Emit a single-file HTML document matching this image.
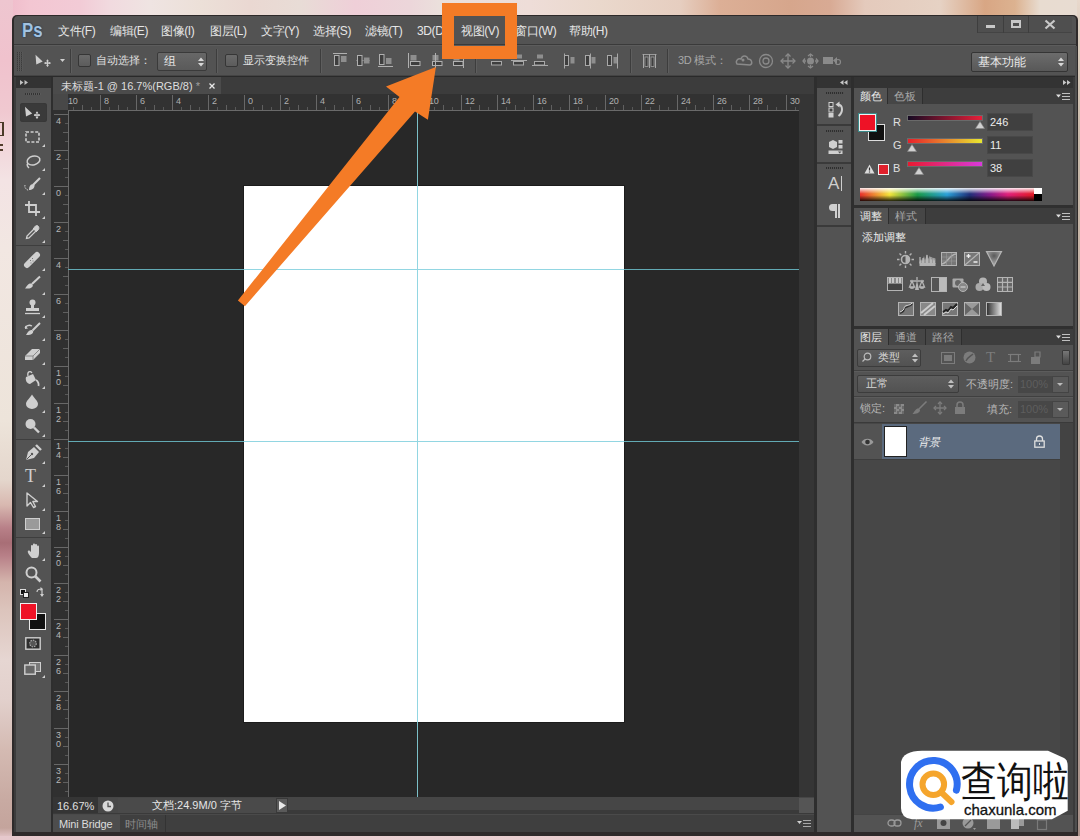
<!DOCTYPE html>
<html><head><meta charset="utf-8"><style>*{margin:0;padding:0;box-sizing:border-box}
html,body{width:1080px;height:840px;overflow:hidden}
body{position:relative;font-family:"Liberation Sans",sans-serif;font-size:12px;color:#e0e0e0;background:#efd6d8}
.a{position:absolute}
.t{position:absolute;white-space:nowrap;line-height:1}
svg{position:absolute;overflow:visible}
</style></head><body>
<div class="a" style="left:0;top:0;width:1080px;height:840px;background:#e9d6d4"></div>
<div class="a" style="left:0;top:0;width:1080px;height:16px;background:linear-gradient(90deg,#eeb8c8 0px,#f3c6d2 30px,#f2cbd6 80px,#f1dadf 110px,#efe4e2 150px,#ece0d8 200px,#ead8d2 250px,#e8dcd6 300px,#efcfd8 355px,#ecd6da 410px,#ebe0dc 440px,#eeddd8 530px,#ead8cc 600px,#e6cec0 680px,#dcaf96 720px,#d6a68c 790px,#d8aa94 830px,#e4cabc 865px,#e6d2c4 940px,#d8a684 985px,#dcb290 1015px,#e8dcd0 1040px,#e8dcd2 1080px)"></div>
<div class="a" style="left:0;top:0;width:13px;height:840px;background:linear-gradient(180deg,#eec6d0 0px,#f0c2cd 60px,#f0c8d0 110px,#f3e3e4 180px,#f2e7e2 250px,#ede4da 420px,#e4d6cc 480px,#d8b8b0 505px,#b88088 528px,#a86e76 543px,#b88088 556px,#d4b4ac 582px,#dcc4bc 610px,#e6d6d2 660px,#e2d0cc 700px,#d4bab2 750px,#c8aaa2 800px,#c4a49c 828px,#e6c8cc 838px)"></div>
<div class="a" style="left:1077px;top:0;width:3px;height:840px;background:linear-gradient(180deg,#e8d8cc 0px,#d8c8b8 60px,#c8b8a8 140px,#c0aca0 420px,#a89088 840px)"></div>
<div class="a" style="left:0;top:836px;width:1080px;height:4px;background:linear-gradient(90deg,#e6c8cc,#ead0d2 40%,#e6c8ca 70%,#e4c6c4)"></div>
<div class="a" style="left:0;top:122px;width:4px;height:14px;border:1.5px solid #4a3a28;border-left:none;border-right-width:2px"></div><div class="a" style="left:0;top:144px;width:3px;height:2px;background:#503c2c"></div><div class="a" style="left:0;top:149px;width:3px;height:2px;background:#503c2c"></div>
<div class="a" style="left:12px;top:15px;width:1066px;height:821px;background:#2e2a2a;border-radius:5px 5px 0 0"></div>
<div class="a" style="left:14px;top:16px;width:1062px;height:816px;background:#535353;border-radius:4px 4px 0 0"></div>
<div class="a" style="left:14px;top:44px;width:1062px;height:1px;background:#3a3a3a"></div>
<div class="a" style="left:14px;top:45px;width:1062px;height:1px;background:#5c5c5c"></div>
<div class="a" style="left:14px;top:75px;width:1062px;height:1px;background:#444"></div><div class="a" style="left:14px;top:76px;width:1062px;height:1px;background:#2a2a2a"></div>
<div class="a" style="left:14px;top:77px;width:1062px;height:755px;background:#3c3c3c"></div>
<div class="t" style="left:58px;top:24px;line-height:14px;font-size:12px;letter-spacing:-0.4px;color:#e6e6e6">文件(F)</div>
<div class="t" style="left:110px;top:24px;line-height:14px;font-size:12px;letter-spacing:-0.4px;color:#e6e6e6">编辑(E)</div>
<div class="t" style="left:161px;top:24px;line-height:14px;font-size:12px;letter-spacing:-0.4px;color:#e6e6e6">图像(I)</div>
<div class="t" style="left:210px;top:24px;line-height:14px;font-size:12px;letter-spacing:-0.4px;color:#e6e6e6">图层(L)</div>
<div class="t" style="left:261px;top:24px;line-height:14px;font-size:12px;letter-spacing:-0.4px;color:#e6e6e6">文字(Y)</div>
<div class="t" style="left:313px;top:24px;line-height:14px;font-size:12px;letter-spacing:-0.4px;color:#e6e6e6">选择(S)</div>
<div class="t" style="left:365px;top:24px;line-height:14px;font-size:12px;letter-spacing:-0.4px;color:#e6e6e6">滤镜(T)</div>
<div class="t" style="left:417px;top:24px;line-height:14px;font-size:12px;letter-spacing:-0.4px;color:#e6e6e6">3D(D)</div>
<div class="t" style="left:461px;top:24px;line-height:14px;font-size:12px;letter-spacing:-0.4px;color:#e6e6e6">视图(V)</div>
<div class="t" style="left:515px;top:24px;line-height:14px;font-size:12px;letter-spacing:-0.4px;color:#e6e6e6">窗口(W)</div>
<div class="t" style="left:569px;top:24px;line-height:14px;font-size:12px;letter-spacing:-0.4px;color:#e6e6e6">帮助(H)</div>
<div class="t" style="left:22px;top:20px;font-size:19.5px;font-weight:bold;color:#a2c2e0;line-height:20px;transform:scaleX(0.86);transform-origin:0 0;text-shadow:0 0 1px #1e3a5a,0 0 2px #1e3a5a">Ps</div>
<div class="a" style="left:977px;top:16px;width:95px;height:17px;background:#4f4f4f;border-bottom:1px solid #444"></div>
<div class="a" style="left:977px;top:16px;width:1px;height:17px;background:#3e3e3e"></div>
<div class="a" style="left:1003px;top:16px;width:1px;height:17px;background:#3e3e3e"></div>
<div class="a" style="left:1028px;top:16px;width:1px;height:17px;background:#3e3e3e"></div>
<div class="a" style="left:986px;top:25px;width:9px;height:3px;background:#c8c8c8"></div>
<div class="a" style="left:1011px;top:20px;width:10px;height:8px;border:2px solid #c8c8c8;border-top-width:3px"></div>
<svg style="left:1044px;top:19px" width="12" height="11"><path d="M1.5 1.5 L10.5 9.5 M10.5 1.5 L1.5 9.5" stroke="#c8c8c8" stroke-width="2.2"/></svg>
<div class="a" style="left:17px;top:52px;width:6px;height:19px;background:repeating-linear-gradient(90deg,#3c3c3c 0 1px,#5a5a5a 1px 2px)"></div><div class="a" style="left:17px;top:52px;width:6px;height:19px;background:repeating-linear-gradient(180deg,rgba(83,83,83,0) 0 1px,rgba(83,83,83,.6) 1px 2px)"></div>
<svg style="left:34px;top:54px" width="20" height="14"><path d="M1.5 0.8 L2.3 10.5 L8.7 7.6 Z" fill="#cfcfcf"/><path d="M13.5 6.2v6 M10.5 9.1h6" stroke="#cfcfcf" stroke-width="1.1"/><path d="M12.1 7.3L13.5 5.3L14.9 7.3Z M12.1 10.9L13.5 12.9L14.9 10.9Z M12.3 7.7L10.3 9.1L12.3 10.5Z M14.7 7.7L16.7 9.1L14.7 10.5Z" fill="#cfcfcf"/></svg>
<svg style="left:60px;top:59px" width="6" height="4"><path d="M0 0 H5 L2.5 3 Z" fill="#d0d0d0"/></svg>
<div class="a" style="left:70px;top:49px;width:1px;height:24px;background:#3d3d3d"></div><div class="a" style="left:71px;top:49px;width:1px;height:24px;background:#5e5e5e"></div>
<div class="a" style="left:78px;top:54px;width:13px;height:13px;border:1px solid #363636;border-radius:2px;background:linear-gradient(#6a6a6a,#5c5c5c)"></div>
<div class="t" style="left:96px;top:54px;line-height:13px;font-size:11px;color:#e0e0e0">自动选择：</div>
<div class="a" style="left:157px;top:52px;width:50px;height:19px;border:1px solid #3a3a3a;border-radius:2px;background:linear-gradient(#676767,#5a5a5a)"></div>
<div class="t" style="left:164px;top:55px;line-height:13px;font-size:12px;color:#e6e6e6">组</div>
<svg style="left:198px;top:57px" width="6" height="10"><path d="M0 4 L3 0.5 L6 4 Z M0 6 L3 9.5 L6 6 Z" fill="#d8d8d8"/></svg>
<div class="a" style="left:216px;top:49px;width:1px;height:24px;background:#3d3d3d"></div><div class="a" style="left:217px;top:49px;width:1px;height:24px;background:#5e5e5e"></div>
<div class="a" style="left:225px;top:54px;width:13px;height:13px;border:1px solid #363636;border-radius:2px;background:linear-gradient(#6a6a6a,#5c5c5c)"></div>
<div class="t" style="left:243px;top:54px;line-height:13px;font-size:11px;color:#e0e0e0">显示变换控件</div>
<div class="a" style="left:320px;top:49px;width:1px;height:24px;background:#3d3d3d"></div><div class="a" style="left:321px;top:49px;width:1px;height:24px;background:#5e5e5e"></div>
<svg style="left:333px;top:53px" width="15" height="15"><path d="M0 0.5h14" stroke="#b0b0b0"/><rect x="1.5" y="2.5" width="4.5" height="10" fill="#3e3e3e" stroke="#b0b0b0"/><rect x="8" y="3" width="5.5" height="6" fill="#8e8e8e"/></svg>
<svg style="left:356px;top:53px" width="15" height="15"><path d="M0 7.5h14" stroke="#7a7a7a"/><rect x="1.5" y="2.5" width="4.5" height="10" fill="#3e3e3e" stroke="#b0b0b0"/><rect x="8" y="4.5" width="5.5" height="6" fill="#8e8e8e"/></svg>
<svg style="left:378px;top:53px" width="15" height="15"><path d="M0 13.5h15" stroke="#b0b0b0"/><rect x="1.5" y="1.5" width="4.5" height="10" fill="#3e3e3e" stroke="#b0b0b0"/><rect x="8" y="5" width="5.5" height="6" fill="#8e8e8e"/></svg>
<svg style="left:408px;top:53px" width="14" height="15"><rect x="2.5" y="2" width="6" height="5.5" fill="#8e8e8e"/><rect x="2.5" y="8.5" width="9.5" height="4" fill="#3e3e3e" stroke="#b0b0b0"/><path d="M0.5 0v15" stroke="#b0b0b0"/></svg>
<svg style="left:430px;top:53px" width="14" height="15"><rect x="2.5" y="2" width="6" height="5.5" fill="#8e8e8e"/><rect x="2.5" y="8.5" width="9.5" height="4" fill="#3e3e3e" stroke="#b0b0b0"/><path d="M5.5 0v15" stroke="#b0b0b0"/></svg>
<svg style="left:451px;top:53px" width="14" height="15"><rect x="2.5" y="2" width="6" height="5.5" fill="#8e8e8e"/><rect x="2.5" y="8.5" width="9.5" height="4" fill="#3e3e3e" stroke="#b0b0b0"/><path d="M12.5 0v15" stroke="#b0b0b0"/></svg>
<div class="a" style="left:475px;top:49px;width:1px;height:24px;background:#3d3d3d"></div><div class="a" style="left:476px;top:49px;width:1px;height:24px;background:#5e5e5e"></div>
<svg style="left:489px;top:53px" width="16" height="15"><rect x="5" y="1.5" width="6" height="4" fill="#8e8e8e"/><rect x="2.5" y="8.5" width="10" height="3.5" fill="#3e3e3e" stroke="#a8a8a8"/><path d="M0 3.5h16" stroke="#a8a8a8"/></svg>
<svg style="left:511px;top:53px" width="16" height="15"><rect x="5" y="1.5" width="6" height="4" fill="#8e8e8e"/><rect x="2.5" y="8.5" width="10" height="3.5" fill="#3e3e3e" stroke="#a8a8a8"/><path d="M0 7.5h16" stroke="#a8a8a8"/></svg>
<svg style="left:532px;top:53px" width="16" height="15"><rect x="5" y="1.5" width="6" height="4" fill="#8e8e8e"/><rect x="2.5" y="8.5" width="10" height="3.5" fill="#3e3e3e" stroke="#a8a8a8"/><path d="M0 12.5h16" stroke="#a8a8a8"/></svg>
<svg style="left:563px;top:53px" width="13" height="16"><rect x="1.5" y="2.5" width="4" height="10" fill="#3e3e3e" stroke="#a8a8a8"/><rect x="7.5" y="4" width="4" height="6.5" fill="#8e8e8e"/><path d="M1.5 0.5v15" stroke="#a8a8a8"/></svg>
<svg style="left:584px;top:53px" width="13" height="16"><rect x="1.5" y="2.5" width="4" height="10" fill="#3e3e3e" stroke="#a8a8a8"/><rect x="7.5" y="4" width="4" height="6.5" fill="#8e8e8e"/><path d="M6.5 0.5v15" stroke="#a8a8a8"/></svg>
<svg style="left:606px;top:53px" width="13" height="16"><rect x="1.5" y="2.5" width="4" height="10" fill="#3e3e3e" stroke="#a8a8a8"/><rect x="7.5" y="4" width="4" height="6.5" fill="#8e8e8e"/><path d="M11.5 0.5v15" stroke="#a8a8a8"/></svg>
<div class="a" style="left:630px;top:49px;width:1px;height:24px;background:#3d3d3d"></div><div class="a" style="left:631px;top:49px;width:1px;height:24px;background:#5e5e5e"></div>
<svg style="left:642px;top:53px" width="15" height="16"><path d="M0.5 1.5h14" stroke="#9a9a9a"/><path d="M1.5 1v14 M7.5 1v14 M13.5 1v14" stroke="#a8a8a8" stroke-width="1"/><rect x="3" y="4" width="3" height="9.5" fill="#3e3e3e" stroke="#a0a0a0" stroke-width="0.8"/><rect x="9" y="4" width="3" height="9.5" fill="#3e3e3e" stroke="#a0a0a0" stroke-width="0.8"/></svg>
<div class="a" style="left:667px;top:49px;width:1px;height:24px;background:#3d3d3d"></div><div class="a" style="left:668px;top:49px;width:1px;height:24px;background:#5e5e5e"></div>
<div class="t" style="left:678px;top:54px;line-height:13px;font-size:11px;letter-spacing:-0.3px;color:#a8a8a8">3D 模式：</div>
<svg style="left:735px;top:53px" width="18" height="15"><path d="M2 11 C0 8 3 5 6 6 C7 2 12 2 13 6 C17 6 18 11 15 12 Z" fill="none" stroke="#8a8a8a" stroke-width="1.4"/><circle cx="8" cy="7" r="1.5" fill="#8a8a8a"/></svg>
<svg style="left:758px;top:53px" width="16" height="16"><circle cx="8" cy="8" r="6.5" fill="none" stroke="#8a8a8a" stroke-width="1.3"/><circle cx="8" cy="8" r="3" fill="none" stroke="#8a8a8a" stroke-width="1.3"/></svg>
<svg style="left:780px;top:53px" width="16" height="16"><path d="M8 1v14 M1 8h14" stroke="#8a8a8a" stroke-width="1.3"/><path d="M5.5 3.5L8 1L10.5 3.5 M5.5 12.5L8 15L10.5 12.5 M3.5 5.5L1 8L3.5 10.5 M12.5 5.5L15 8L12.5 10.5" fill="none" stroke="#8a8a8a" stroke-width="1.3"/></svg>
<svg style="left:802px;top:53px" width="17" height="16"><circle cx="8.5" cy="8" r="3.5" fill="#8a8a8a"/><path d="M8.5 1v3 M8.5 12v3 M1 8h3 M13 8h3" stroke="#8a8a8a" stroke-width="1.3"/><path d="M6 3L8.5 1L11 3 M6 13L8.5 15L11 13 M3 5.5L1 8L3 10.5 M14 5.5L16 8L14 10.5" fill="none" stroke="#8a8a8a" stroke-width="1.3"/></svg>
<svg style="left:823px;top:54px" width="18" height="14"><rect x="0" y="3" width="10" height="7" fill="#8a8a8a"/><path d="M10 6.5 L14 3 V10 Z" fill="#8a8a8a"/><circle cx="15" cy="8" r="2.5" fill="none" stroke="#8a8a8a" stroke-width="1.2"/></svg>
<div class="a" style="left:971px;top:52px;width:97px;height:20px;border:1px solid #353535;border-radius:2px;background:linear-gradient(#6c6c6c,#585858)"></div>
<div class="t" style="left:978px;top:55px;line-height:14px;font-size:11.5px;color:#ececec">基本功能</div>
<svg style="left:1058px;top:57px" width="6" height="10"><path d="M0 4 L3 0.5 L6 4 Z M0 6 L3 9.5 L6 6 Z" fill="#d8d8d8"/></svg>
<div class="a" style="left:16px;top:77px;width:36px;height:11px;background:#333"></div>
<svg style="left:20px;top:80px" width="10" height="5"><path d="M0 0L3.5 2.5L0 5Z M4.5 0L8 2.5L4.5 5Z" fill="#c0c0c0"/></svg>
<div class="a" style="left:53px;top:77px;width:761px;height:17px;background:#3c3c3c"></div>
<div class="a" style="left:53px;top:77px;width:168px;height:17px;background:#4b4b4b"></div>
<div class="t" style="left:61px;top:79px;line-height:14px;font-size:11px;color:#dedede">未标题-1 @ 16.7%(RGB/8) <span style="color:#a0a0a0">*</span></div>
<svg style="left:209px;top:83px" width="6" height="6"><path d="M0.5 0.5L5.5 5.5M5.5 0.5L0.5 5.5" stroke="#e8e8e8" stroke-width="1.3"/></svg>
<div class="a" style="left:53px;top:94px;width:747px;height:17px;background:#323232"></div>
<div class="a" style="left:53px;top:110px;width:15px;height:689px;background:#303030"></div>
<div class="a" style="left:53px;top:94px;width:15px;height:16px;background:#484848"></div>
<div class="a" style="left:68px;top:110px;width:732px;height:1px;background:#6a6a6a"></div>
<div class="a" style="left:68px;top:110px;width:1px;height:688px;background:#6a6a6a"></div>
<div class="a" style="left:69px;top:111px;width:730px;height:686px;background:#282828"></div>
<div class="a" style="left:799px;top:94px;width:15px;height:704px;background:#353535"></div>
<div class="t" style="left:68px;top:97px;line-height:9px;font-size:9px;color:#b0b0b0;letter-spacing:-0.3px">10</div>
<div class="a" style="left:73px;top:107px;width:1px;height:3px;background:#585858"></div>
<div class="a" style="left:82px;top:105px;width:1px;height:5px;background:#606060"></div>
<div class="a" style="left:91px;top:107px;width:1px;height:3px;background:#585858"></div>
<div class="a" style="left:100px;top:95px;width:1px;height:15px;background:#686868"></div>
<div class="t" style="left:104px;top:97px;line-height:9px;font-size:9px;color:#b0b0b0;letter-spacing:-0.3px">8</div>
<div class="a" style="left:109px;top:107px;width:1px;height:3px;background:#585858"></div>
<div class="a" style="left:118px;top:105px;width:1px;height:5px;background:#606060"></div>
<div class="a" style="left:127px;top:107px;width:1px;height:3px;background:#585858"></div>
<div class="a" style="left:136px;top:95px;width:1px;height:15px;background:#686868"></div>
<div class="t" style="left:140px;top:97px;line-height:9px;font-size:9px;color:#b0b0b0;letter-spacing:-0.3px">6</div>
<div class="a" style="left:145px;top:107px;width:1px;height:3px;background:#585858"></div>
<div class="a" style="left:154px;top:105px;width:1px;height:5px;background:#606060"></div>
<div class="a" style="left:163px;top:107px;width:1px;height:3px;background:#585858"></div>
<div class="a" style="left:172px;top:95px;width:1px;height:15px;background:#686868"></div>
<div class="t" style="left:176px;top:97px;line-height:9px;font-size:9px;color:#b0b0b0;letter-spacing:-0.3px">4</div>
<div class="a" style="left:181px;top:107px;width:1px;height:3px;background:#585858"></div>
<div class="a" style="left:190px;top:105px;width:1px;height:5px;background:#606060"></div>
<div class="a" style="left:199px;top:107px;width:1px;height:3px;background:#585858"></div>
<div class="a" style="left:208px;top:95px;width:1px;height:15px;background:#686868"></div>
<div class="t" style="left:212px;top:97px;line-height:9px;font-size:9px;color:#b0b0b0;letter-spacing:-0.3px">2</div>
<div class="a" style="left:217px;top:107px;width:1px;height:3px;background:#585858"></div>
<div class="a" style="left:226px;top:105px;width:1px;height:5px;background:#606060"></div>
<div class="a" style="left:235px;top:107px;width:1px;height:3px;background:#585858"></div>
<div class="a" style="left:244px;top:95px;width:1px;height:15px;background:#686868"></div>
<div class="t" style="left:248px;top:97px;line-height:9px;font-size:9px;color:#b0b0b0;letter-spacing:-0.3px">0</div>
<div class="a" style="left:253px;top:107px;width:1px;height:3px;background:#585858"></div>
<div class="a" style="left:262px;top:105px;width:1px;height:5px;background:#606060"></div>
<div class="a" style="left:271px;top:107px;width:1px;height:3px;background:#585858"></div>
<div class="a" style="left:280px;top:95px;width:1px;height:15px;background:#686868"></div>
<div class="t" style="left:284px;top:97px;line-height:9px;font-size:9px;color:#b0b0b0;letter-spacing:-0.3px">2</div>
<div class="a" style="left:289px;top:107px;width:1px;height:3px;background:#585858"></div>
<div class="a" style="left:298px;top:105px;width:1px;height:5px;background:#606060"></div>
<div class="a" style="left:307px;top:107px;width:1px;height:3px;background:#585858"></div>
<div class="a" style="left:316px;top:95px;width:1px;height:15px;background:#686868"></div>
<div class="t" style="left:320px;top:97px;line-height:9px;font-size:9px;color:#b0b0b0;letter-spacing:-0.3px">4</div>
<div class="a" style="left:325px;top:107px;width:1px;height:3px;background:#585858"></div>
<div class="a" style="left:334px;top:105px;width:1px;height:5px;background:#606060"></div>
<div class="a" style="left:343px;top:107px;width:1px;height:3px;background:#585858"></div>
<div class="a" style="left:352px;top:95px;width:1px;height:15px;background:#686868"></div>
<div class="t" style="left:356px;top:97px;line-height:9px;font-size:9px;color:#b0b0b0;letter-spacing:-0.3px">6</div>
<div class="a" style="left:361px;top:107px;width:1px;height:3px;background:#585858"></div>
<div class="a" style="left:370px;top:105px;width:1px;height:5px;background:#606060"></div>
<div class="a" style="left:379px;top:107px;width:1px;height:3px;background:#585858"></div>
<div class="a" style="left:388px;top:95px;width:1px;height:15px;background:#686868"></div>
<div class="t" style="left:392px;top:97px;line-height:9px;font-size:9px;color:#b0b0b0;letter-spacing:-0.3px">8</div>
<div class="a" style="left:397px;top:107px;width:1px;height:3px;background:#585858"></div>
<div class="a" style="left:406px;top:105px;width:1px;height:5px;background:#606060"></div>
<div class="a" style="left:415px;top:107px;width:1px;height:3px;background:#585858"></div>
<div class="a" style="left:425px;top:95px;width:1px;height:15px;background:#686868"></div>
<div class="t" style="left:429px;top:97px;line-height:9px;font-size:9px;color:#b0b0b0;letter-spacing:-0.3px">10</div>
<div class="a" style="left:434px;top:107px;width:1px;height:3px;background:#585858"></div>
<div class="a" style="left:443px;top:105px;width:1px;height:5px;background:#606060"></div>
<div class="a" style="left:452px;top:107px;width:1px;height:3px;background:#585858"></div>
<div class="a" style="left:461px;top:95px;width:1px;height:15px;background:#686868"></div>
<div class="t" style="left:465px;top:97px;line-height:9px;font-size:9px;color:#b0b0b0;letter-spacing:-0.3px">12</div>
<div class="a" style="left:470px;top:107px;width:1px;height:3px;background:#585858"></div>
<div class="a" style="left:479px;top:105px;width:1px;height:5px;background:#606060"></div>
<div class="a" style="left:488px;top:107px;width:1px;height:3px;background:#585858"></div>
<div class="a" style="left:497px;top:95px;width:1px;height:15px;background:#686868"></div>
<div class="t" style="left:501px;top:97px;line-height:9px;font-size:9px;color:#b0b0b0;letter-spacing:-0.3px">14</div>
<div class="a" style="left:506px;top:107px;width:1px;height:3px;background:#585858"></div>
<div class="a" style="left:515px;top:105px;width:1px;height:5px;background:#606060"></div>
<div class="a" style="left:524px;top:107px;width:1px;height:3px;background:#585858"></div>
<div class="a" style="left:533px;top:95px;width:1px;height:15px;background:#686868"></div>
<div class="t" style="left:537px;top:97px;line-height:9px;font-size:9px;color:#b0b0b0;letter-spacing:-0.3px">16</div>
<div class="a" style="left:542px;top:107px;width:1px;height:3px;background:#585858"></div>
<div class="a" style="left:551px;top:105px;width:1px;height:5px;background:#606060"></div>
<div class="a" style="left:560px;top:107px;width:1px;height:3px;background:#585858"></div>
<div class="a" style="left:569px;top:95px;width:1px;height:15px;background:#686868"></div>
<div class="t" style="left:573px;top:97px;line-height:9px;font-size:9px;color:#b0b0b0;letter-spacing:-0.3px">18</div>
<div class="a" style="left:578px;top:107px;width:1px;height:3px;background:#585858"></div>
<div class="a" style="left:587px;top:105px;width:1px;height:5px;background:#606060"></div>
<div class="a" style="left:596px;top:107px;width:1px;height:3px;background:#585858"></div>
<div class="a" style="left:605px;top:95px;width:1px;height:15px;background:#686868"></div>
<div class="t" style="left:609px;top:97px;line-height:9px;font-size:9px;color:#b0b0b0;letter-spacing:-0.3px">20</div>
<div class="a" style="left:614px;top:107px;width:1px;height:3px;background:#585858"></div>
<div class="a" style="left:623px;top:105px;width:1px;height:5px;background:#606060"></div>
<div class="a" style="left:632px;top:107px;width:1px;height:3px;background:#585858"></div>
<div class="a" style="left:641px;top:95px;width:1px;height:15px;background:#686868"></div>
<div class="t" style="left:645px;top:97px;line-height:9px;font-size:9px;color:#b0b0b0;letter-spacing:-0.3px">22</div>
<div class="a" style="left:650px;top:107px;width:1px;height:3px;background:#585858"></div>
<div class="a" style="left:659px;top:105px;width:1px;height:5px;background:#606060"></div>
<div class="a" style="left:668px;top:107px;width:1px;height:3px;background:#585858"></div>
<div class="a" style="left:677px;top:95px;width:1px;height:15px;background:#686868"></div>
<div class="t" style="left:681px;top:97px;line-height:9px;font-size:9px;color:#b0b0b0;letter-spacing:-0.3px">24</div>
<div class="a" style="left:686px;top:107px;width:1px;height:3px;background:#585858"></div>
<div class="a" style="left:695px;top:105px;width:1px;height:5px;background:#606060"></div>
<div class="a" style="left:704px;top:107px;width:1px;height:3px;background:#585858"></div>
<div class="a" style="left:713px;top:95px;width:1px;height:15px;background:#686868"></div>
<div class="t" style="left:717px;top:97px;line-height:9px;font-size:9px;color:#b0b0b0;letter-spacing:-0.3px">26</div>
<div class="a" style="left:722px;top:107px;width:1px;height:3px;background:#585858"></div>
<div class="a" style="left:731px;top:105px;width:1px;height:5px;background:#606060"></div>
<div class="a" style="left:740px;top:107px;width:1px;height:3px;background:#585858"></div>
<div class="a" style="left:749px;top:95px;width:1px;height:15px;background:#686868"></div>
<div class="t" style="left:753px;top:97px;line-height:9px;font-size:9px;color:#b0b0b0;letter-spacing:-0.3px">28</div>
<div class="a" style="left:758px;top:107px;width:1px;height:3px;background:#585858"></div>
<div class="a" style="left:767px;top:105px;width:1px;height:5px;background:#606060"></div>
<div class="a" style="left:776px;top:107px;width:1px;height:3px;background:#585858"></div>
<div class="a" style="left:786px;top:95px;width:1px;height:15px;background:#686868"></div>
<div class="t" style="left:790px;top:97px;line-height:9px;font-size:9px;color:#b0b0b0;letter-spacing:-0.3px">30</div>
<div class="a" style="left:795px;top:107px;width:1px;height:3px;background:#585858"></div>
<div class="a" style="left:54px;top:114px;width:14px;height:1px;background:#686868"></div>
<div class="t" style="left:56px;top:117px;line-height:9px;font-size:9px;color:#b8b8b8"><div>4</div></div>
<div class="a" style="left:65px;top:123px;width:3px;height:1px;background:#585858"></div>
<div class="a" style="left:63px;top:132px;width:5px;height:1px;background:#606060"></div>
<div class="a" style="left:65px;top:141px;width:3px;height:1px;background:#585858"></div>
<div class="a" style="left:54px;top:150px;width:14px;height:1px;background:#686868"></div>
<div class="t" style="left:56px;top:153px;line-height:9px;font-size:9px;color:#b8b8b8"><div>2</div></div>
<div class="a" style="left:65px;top:159px;width:3px;height:1px;background:#585858"></div>
<div class="a" style="left:63px;top:168px;width:5px;height:1px;background:#606060"></div>
<div class="a" style="left:65px;top:177px;width:3px;height:1px;background:#585858"></div>
<div class="a" style="left:54px;top:186px;width:14px;height:1px;background:#686868"></div>
<div class="t" style="left:56px;top:189px;line-height:9px;font-size:9px;color:#b8b8b8"><div>0</div></div>
<div class="a" style="left:65px;top:195px;width:3px;height:1px;background:#585858"></div>
<div class="a" style="left:63px;top:204px;width:5px;height:1px;background:#606060"></div>
<div class="a" style="left:65px;top:213px;width:3px;height:1px;background:#585858"></div>
<div class="a" style="left:54px;top:222px;width:14px;height:1px;background:#686868"></div>
<div class="t" style="left:56px;top:225px;line-height:9px;font-size:9px;color:#b8b8b8"><div>2</div></div>
<div class="a" style="left:65px;top:231px;width:3px;height:1px;background:#585858"></div>
<div class="a" style="left:63px;top:240px;width:5px;height:1px;background:#606060"></div>
<div class="a" style="left:65px;top:249px;width:3px;height:1px;background:#585858"></div>
<div class="a" style="left:54px;top:258px;width:14px;height:1px;background:#686868"></div>
<div class="t" style="left:56px;top:261px;line-height:9px;font-size:9px;color:#b8b8b8"><div>4</div></div>
<div class="a" style="left:65px;top:267px;width:3px;height:1px;background:#585858"></div>
<div class="a" style="left:63px;top:276px;width:5px;height:1px;background:#606060"></div>
<div class="a" style="left:65px;top:285px;width:3px;height:1px;background:#585858"></div>
<div class="a" style="left:54px;top:294px;width:14px;height:1px;background:#686868"></div>
<div class="t" style="left:56px;top:297px;line-height:9px;font-size:9px;color:#b8b8b8"><div>6</div></div>
<div class="a" style="left:65px;top:303px;width:3px;height:1px;background:#585858"></div>
<div class="a" style="left:63px;top:312px;width:5px;height:1px;background:#606060"></div>
<div class="a" style="left:65px;top:321px;width:3px;height:1px;background:#585858"></div>
<div class="a" style="left:54px;top:330px;width:14px;height:1px;background:#686868"></div>
<div class="t" style="left:56px;top:333px;line-height:9px;font-size:9px;color:#b8b8b8"><div>8</div></div>
<div class="a" style="left:65px;top:339px;width:3px;height:1px;background:#585858"></div>
<div class="a" style="left:63px;top:348px;width:5px;height:1px;background:#606060"></div>
<div class="a" style="left:65px;top:357px;width:3px;height:1px;background:#585858"></div>
<div class="a" style="left:54px;top:366px;width:14px;height:1px;background:#686868"></div>
<div class="t" style="left:56px;top:369px;line-height:9px;font-size:9px;color:#b8b8b8"><div>1</div><div>0</div></div>
<div class="a" style="left:65px;top:376px;width:3px;height:1px;background:#585858"></div>
<div class="a" style="left:63px;top:385px;width:5px;height:1px;background:#606060"></div>
<div class="a" style="left:65px;top:394px;width:3px;height:1px;background:#585858"></div>
<div class="a" style="left:54px;top:403px;width:14px;height:1px;background:#686868"></div>
<div class="t" style="left:56px;top:406px;line-height:9px;font-size:9px;color:#b8b8b8"><div>1</div><div>2</div></div>
<div class="a" style="left:65px;top:412px;width:3px;height:1px;background:#585858"></div>
<div class="a" style="left:63px;top:421px;width:5px;height:1px;background:#606060"></div>
<div class="a" style="left:65px;top:430px;width:3px;height:1px;background:#585858"></div>
<div class="a" style="left:54px;top:439px;width:14px;height:1px;background:#686868"></div>
<div class="t" style="left:56px;top:442px;line-height:9px;font-size:9px;color:#b8b8b8"><div>1</div><div>4</div></div>
<div class="a" style="left:65px;top:448px;width:3px;height:1px;background:#585858"></div>
<div class="a" style="left:63px;top:457px;width:5px;height:1px;background:#606060"></div>
<div class="a" style="left:65px;top:466px;width:3px;height:1px;background:#585858"></div>
<div class="a" style="left:54px;top:475px;width:14px;height:1px;background:#686868"></div>
<div class="t" style="left:56px;top:478px;line-height:9px;font-size:9px;color:#b8b8b8"><div>1</div><div>6</div></div>
<div class="a" style="left:65px;top:484px;width:3px;height:1px;background:#585858"></div>
<div class="a" style="left:63px;top:493px;width:5px;height:1px;background:#606060"></div>
<div class="a" style="left:65px;top:502px;width:3px;height:1px;background:#585858"></div>
<div class="a" style="left:54px;top:511px;width:14px;height:1px;background:#686868"></div>
<div class="t" style="left:56px;top:514px;line-height:9px;font-size:9px;color:#b8b8b8"><div>1</div><div>8</div></div>
<div class="a" style="left:65px;top:520px;width:3px;height:1px;background:#585858"></div>
<div class="a" style="left:63px;top:529px;width:5px;height:1px;background:#606060"></div>
<div class="a" style="left:65px;top:538px;width:3px;height:1px;background:#585858"></div>
<div class="a" style="left:54px;top:547px;width:14px;height:1px;background:#686868"></div>
<div class="t" style="left:56px;top:550px;line-height:9px;font-size:9px;color:#b8b8b8"><div>2</div><div>0</div></div>
<div class="a" style="left:65px;top:556px;width:3px;height:1px;background:#585858"></div>
<div class="a" style="left:63px;top:565px;width:5px;height:1px;background:#606060"></div>
<div class="a" style="left:65px;top:574px;width:3px;height:1px;background:#585858"></div>
<div class="a" style="left:54px;top:583px;width:14px;height:1px;background:#686868"></div>
<div class="t" style="left:56px;top:586px;line-height:9px;font-size:9px;color:#b8b8b8"><div>2</div><div>2</div></div>
<div class="a" style="left:65px;top:592px;width:3px;height:1px;background:#585858"></div>
<div class="a" style="left:63px;top:601px;width:5px;height:1px;background:#606060"></div>
<div class="a" style="left:65px;top:610px;width:3px;height:1px;background:#585858"></div>
<div class="a" style="left:54px;top:619px;width:14px;height:1px;background:#686868"></div>
<div class="t" style="left:56px;top:622px;line-height:9px;font-size:9px;color:#b8b8b8"><div>2</div><div>4</div></div>
<div class="a" style="left:65px;top:628px;width:3px;height:1px;background:#585858"></div>
<div class="a" style="left:63px;top:637px;width:5px;height:1px;background:#606060"></div>
<div class="a" style="left:65px;top:646px;width:3px;height:1px;background:#585858"></div>
<div class="a" style="left:54px;top:655px;width:14px;height:1px;background:#686868"></div>
<div class="t" style="left:56px;top:658px;line-height:9px;font-size:9px;color:#b8b8b8"><div>2</div><div>6</div></div>
<div class="a" style="left:65px;top:664px;width:3px;height:1px;background:#585858"></div>
<div class="a" style="left:63px;top:673px;width:5px;height:1px;background:#606060"></div>
<div class="a" style="left:65px;top:682px;width:3px;height:1px;background:#585858"></div>
<div class="a" style="left:54px;top:691px;width:14px;height:1px;background:#686868"></div>
<div class="t" style="left:56px;top:694px;line-height:9px;font-size:9px;color:#b8b8b8"><div>2</div><div>8</div></div>
<div class="a" style="left:65px;top:700px;width:3px;height:1px;background:#585858"></div>
<div class="a" style="left:63px;top:709px;width:5px;height:1px;background:#606060"></div>
<div class="a" style="left:65px;top:718px;width:3px;height:1px;background:#585858"></div>
<div class="a" style="left:54px;top:728px;width:14px;height:1px;background:#686868"></div>
<div class="t" style="left:56px;top:731px;line-height:9px;font-size:9px;color:#b8b8b8"><div>3</div><div>0</div></div>
<div class="a" style="left:65px;top:737px;width:3px;height:1px;background:#585858"></div>
<div class="a" style="left:63px;top:746px;width:5px;height:1px;background:#606060"></div>
<div class="a" style="left:65px;top:755px;width:3px;height:1px;background:#585858"></div>
<div class="a" style="left:54px;top:764px;width:14px;height:1px;background:#686868"></div>
<div class="t" style="left:56px;top:767px;line-height:9px;font-size:9px;color:#b8b8b8"><div>3</div><div>2</div></div>
<div class="a" style="left:65px;top:773px;width:3px;height:1px;background:#585858"></div>
<div class="a" style="left:63px;top:782px;width:5px;height:1px;background:#606060"></div>
<div class="a" style="left:65px;top:791px;width:3px;height:1px;background:#585858"></div>
<div class="a" style="left:243px;top:185px;width:382px;height:538px;background:#fff;border:1px solid #1c1c1c"></div>
<div class="a" style="left:68px;top:269px;width:176px;height:1px;background:#62aab4"></div>
<div class="a" style="left:244px;top:269px;width:380px;height:1px;background:#92d6e2"></div>
<div class="a" style="left:624px;top:269px;width:175px;height:1px;background:#62aab4"></div>
<div class="a" style="left:68px;top:441px;width:176px;height:1px;background:#62aab4"></div>
<div class="a" style="left:244px;top:441px;width:380px;height:1px;background:#92d6e2"></div>
<div class="a" style="left:624px;top:441px;width:175px;height:1px;background:#62aab4"></div>
<div class="a" style="left:417px;top:111px;width:1px;height:75px;background:#7cc0c8"></div>
<div class="a" style="left:417px;top:186px;width:1px;height:536px;background:#92d6e2"></div>
<div class="a" style="left:417px;top:722px;width:1px;height:76px;background:#7cc0c8"></div>
<div class="a" style="left:53px;top:797px;width:761px;height:13px;background:#464646"></div>
<div class="a" style="left:53px;top:810px;width:761px;height:4px;background:#3a3a3a"></div>
<div class="a" style="left:53px;top:797px;width:45px;height:16px;background:#353535"></div>
<div class="t" style="left:57px;top:800px;line-height:12px;font-size:11px;color:#e0e0e0">16.67%</div>
<div class="a" style="left:98px;top:798px;width:20px;height:15px;background:#484848"></div>
<svg style="left:102px;top:800px" width="12" height="12"><circle cx="6" cy="6" r="5.5" fill="#d8d8d8"/><path d="M6 2.5V6.5H9" stroke="#555" stroke-width="1.3" fill="none"/></svg>
<div class="a" style="left:118px;top:798px;width:158px;height:15px;background:#4a4a4a"></div>
<div class="t" style="left:152px;top:799px;line-height:13px;font-size:11px;color:#e6e6e6">文档:24.9M/0 字节</div>
<div class="a" style="left:276px;top:798px;width:12px;height:15px;background:#5a5a5a;border:1px solid #3a3a3a"></div>
<svg style="left:279px;top:801px" width="7" height="9"><path d="M0 0L7 4.5L0 9Z" fill="#e8e8e8"/></svg>
<div class="a" style="left:799px;top:798px;width:15px;height:15px;background:#555"></div>
<div class="a" style="left:53px;top:814px;width:761px;height:18px;background:#3f3f3f;border-top:1px solid #4a4a4a"></div>
<div class="a" style="left:53px;top:815px;width:67px;height:17px;background:#4d4d4d"></div>
<div class="t" style="left:59px;top:818px;line-height:12px;font-size:11px;letter-spacing:-0.15px;color:#dcdcdc">Mini Bridge</div>
<div class="t" style="left:125px;top:818px;line-height:12px;font-size:11px;color:#8c8c8c">时间轴</div>
<div class="a" style="left:165px;top:815px;width:1px;height:17px;background:#333"></div>
<svg style="left:797px;top:819px" width="15" height="9"><path d="M0 2H5L2.5 5Z" fill="#d0d0d0"/><path d="M6 1.5H14M6 4.5H14M6 7.5H14" stroke="#a8a8a8"/></svg>
<div class="a" style="left:814px;top:77px;width:3px;height:755px;background:#2e2e2e"></div>
<div class="a" style="left:51px;top:77px;width:2px;height:755px;background:#2e2e2e"></div>
<div class="a" style="left:16px;top:88px;width:35px;height:744px;background:#535353"></div>
<div class="a" style="left:25px;top:93px;width:16px;height:2px;background:repeating-linear-gradient(90deg,#333 0 1px,#5a5a5a 1px 2px)"></div>
<div class="a" style="left:20px;top:103px;width:27px;height:19px;background:#3a3a3a;border-radius:3px;box-shadow:inset 0 0 1px #2a2a2a"></div>
<svg style="left:24px;top:106px" width="18" height="14"><path d="M1 0.8 L2 10.5 L8.2 7.6 Z" fill="#cfcfcf"/><path d="M13 6.2v6 M10 9.1h6" stroke="#cfcfcf" stroke-width="1.1"/><path d="M11.6 7.3L13 5.3L14.4 7.3Z M11.6 10.9L13 12.9L14.4 10.9Z M11.8 7.7L9.8 9.1L11.8 10.5Z M14.2 7.7L16.2 9.1L14.2 10.5Z" fill="#cfcfcf"/></svg>
<svg style="left:25px;top:131px" width="15" height="12"><rect x="1" y="1" width="13" height="10" fill="none" stroke="#cfcfcf" stroke-width="1.6" stroke-dasharray="3 1.6"/></svg><svg style="left:42px;top:144px" width="3" height="3"><path d="M3 0V3H0Z" fill="#d0d0d0"/></svg>
<svg style="left:25px;top:155px" width="16" height="14"><ellipse cx="8.5" cy="5.5" rx="6.5" ry="4.3" fill="none" stroke="#cfcfcf" stroke-width="1.5" transform="rotate(-15 8.5 5.5)"/><path d="M3 8 C1 10 3 12 4 13" fill="none" stroke="#cfcfcf" stroke-width="1.4"/></svg><svg style="left:42px;top:168px" width="3" height="3"><path d="M3 0V3H0Z" fill="#d0d0d0"/></svg>
<svg style="left:24px;top:177px" width="18" height="15"><path d="M16 1 L9 8" stroke="#cfcfcf" stroke-width="2.2"/><path d="M9.5 7 C6 7 5 10 5 13 C8 13 11 11 10.5 8 Z" fill="#cfcfcf"/><path d="M1 8 C0 11 3 13 5 13.5" fill="none" stroke="#cfcfcf" stroke-width="1" stroke-dasharray="1.5 1"/></svg><svg style="left:42px;top:192px" width="3" height="3"><path d="M3 0V3H0Z" fill="#d0d0d0"/></svg>
<svg style="left:25px;top:201px" width="16" height="15"><path d="M4 0v11h11 M0 4h11v11" fill="none" stroke="#cfcfcf" stroke-width="1.8"/></svg><svg style="left:42px;top:216px" width="3" height="3"><path d="M3 0V3H0Z" fill="#d0d0d0"/></svg>
<svg style="left:25px;top:224px" width="16" height="16"><path d="M1.5 14.5 L2 12 L9 5 L11 7 L4 14 Z" fill="none" stroke="#cfcfcf" stroke-width="1.3"/><path d="M8 4 L12 8 M10 2.5 C12 0 15 3 13.5 5.5 L11.5 7.5 L8.5 4.5 Z" fill="#cfcfcf" stroke="#cfcfcf" stroke-width="1"/></svg><svg style="left:42px;top:240px" width="3" height="3"><path d="M3 0V3H0Z" fill="#d0d0d0"/></svg>
<div class="a" style="left:16px;top:245px;width:35px;height:1px;background:#3e3e3e"></div>
<svg style="left:24px;top:252px" width="17" height="16"><path d="M3 13 L13 3" stroke="#cfcfcf" stroke-width="6" stroke-linecap="round"/><path d="M6 8.5h1M8 6.5h1M8.5 9h1M6.5 11h1" stroke="#7a7a7a" stroke-width="1.2"/></svg><svg style="left:42px;top:268px" width="3" height="3"><path d="M3 0V3H0Z" fill="#d0d0d0"/></svg>
<svg style="left:24px;top:276px" width="17" height="14"><path d="M16 0.5 L8 8" stroke="#cfcfcf" stroke-width="2"/><path d="M7.5 7.5 C4 7 3 10 1 12.5 C5 13 9 12 8.8 9 Z" fill="#cfcfcf"/></svg><svg style="left:42px;top:292px" width="3" height="3"><path d="M3 0V3H0Z" fill="#d0d0d0"/></svg>
<svg style="left:24px;top:299px" width="17" height="16"><circle cx="8.5" cy="3.5" r="3" fill="#cfcfcf"/><path d="M7 6h3v3h-3z" fill="#cfcfcf"/><rect x="2" y="9" width="13" height="3" fill="#cfcfcf"/><path d="M1 14.5h15" stroke="#cfcfcf" stroke-width="1.3"/></svg><svg style="left:42px;top:315px" width="3" height="3"><path d="M3 0V3H0Z" fill="#d0d0d0"/></svg>
<svg style="left:24px;top:322px" width="17" height="15"><path d="M16 1 L8.5 8.5" stroke="#cfcfcf" stroke-width="2"/><path d="M8 8 C5 7.5 4 10 2 13 C6 13.5 9.5 12 9.2 9.3 Z" fill="#cfcfcf"/><path d="M1 6 C3 3 6 3 8 4" fill="none" stroke="#cfcfcf" stroke-width="1.3"/><path d="M1 3.5 L1 7 L4 6.5Z" fill="#cfcfcf"/></svg><svg style="left:42px;top:338px" width="3" height="3"><path d="M3 0V3H0Z" fill="#d0d0d0"/></svg>
<svg style="left:24px;top:347px" width="17" height="14"><path d="M1 9 L8 2 L16 2 L16 6 L9 13 L1 13 Z" fill="#cfcfcf"/><path d="M1 9 L9 9 L16 2 M9 9 V13" stroke="#777" stroke-width="0.8" fill="none"/></svg><svg style="left:42px;top:362px" width="3" height="3"><path d="M3 0V3H0Z" fill="#d0d0d0"/></svg>
<svg style="left:24px;top:370px" width="17" height="17"><path d="M2 7 L9 4 L12 10 L6 14 C3 14 1 10 2 7Z" fill="#cfcfcf"/><path d="M4 6 C3 2 6 0 8 3" fill="none" stroke="#cfcfcf" stroke-width="1.3"/><path d="M12 10 C14 11 15 14 14.5 16" fill="none" stroke="#cfcfcf" stroke-width="1.8"/></svg><svg style="left:42px;top:386px" width="3" height="3"><path d="M3 0V3H0Z" fill="#d0d0d0"/></svg>
<svg style="left:25px;top:394px" width="14" height="15"><path d="M7 0.5 C9 4 13 7 13 10 A6 5 0 0 1 1 10 C1 7 5 4 7 0.5Z" fill="#cfcfcf"/></svg><svg style="left:42px;top:410px" width="3" height="3"><path d="M3 0V3H0Z" fill="#d0d0d0"/></svg>
<svg style="left:24px;top:418px" width="17" height="16"><circle cx="6.5" cy="6" r="5" fill="#cfcfcf"/><path d="M10 9.5 L15 14.5" stroke="#cfcfcf" stroke-width="2.4"/></svg><svg style="left:42px;top:434px" width="3" height="3"><path d="M3 0V3H0Z" fill="#d0d0d0"/></svg>
<div class="a" style="left:16px;top:439px;width:35px;height:1px;background:#3e3e3e"></div>
<svg style="left:25px;top:444px" width="17" height="17"><path d="M1 16 L3 8 L9 3 L14 8 L9 14 Z" fill="#cfcfcf"/><path d="M11 1 L16 6" stroke="#cfcfcf" stroke-width="2.4"/><path d="M1.5 15.5 L6.5 10.5" stroke="#555" stroke-width="1"/><circle cx="7" cy="10" r="1.2" fill="#555"/></svg><svg style="left:42px;top:461px" width="3" height="3"><path d="M3 0V3H0Z" fill="#d0d0d0"/></svg>
<div class="t" style="left:25px;top:468px;font-family:'Liberation Serif',serif;font-size:18px;line-height:16px;color:#cfcfcf">T</div><svg style="left:42px;top:484px" width="3" height="3"><path d="M3 0V3H0Z" fill="#d0d0d0"/></svg>
<svg style="left:26px;top:492px" width="13" height="16"><path d="M1 1 L1 14 L4.5 10.5 L7.5 15.5 L9.5 14.5 L6.8 9.5 L11.5 9.5 Z" fill="none" stroke="#cfcfcf" stroke-width="1.4" stroke-linejoin="round"/></svg><svg style="left:42px;top:508px" width="3" height="3"><path d="M3 0V3H0Z" fill="#d0d0d0"/></svg>
<div class="a" style="left:25px;top:518px;width:15px;height:12px;background:#9a9a9a;border:1px solid #cfcfcf"></div><svg style="left:42px;top:531px" width="3" height="3"><path d="M3 0V3H0Z" fill="#d0d0d0"/></svg>
<div class="a" style="left:16px;top:537px;width:35px;height:1px;background:#3e3e3e"></div>
<svg style="left:27px;top:543px" width="17" height="16"><path d="M5 15 C2 12 0 9 1 8 C2 7 3 8 4 9 L4 3 C4 1.5 6 1.5 6 3 L6 7 L6 1.5 C6 0 8 0 8 1.5 L8 7 L8 2 C8 0.5 10 0.5 10 2 L10 7.5 L10 3.5 C10 2 12 2 12 3.5 L12 10 C12 13 11 15 9 15 Z" fill="#cfcfcf"/></svg><svg style="left:42px;top:558px" width="3" height="3"><path d="M3 0V3H0Z" fill="#d0d0d0"/></svg>
<svg style="left:25px;top:566px" width="17" height="17"><circle cx="6.5" cy="6.5" r="5" fill="none" stroke="#cfcfcf" stroke-width="2"/><path d="M10 10 L15.5 15.5" stroke="#cfcfcf" stroke-width="2.6"/></svg>
<div class="a" style="left:20px;top:589px;width:6px;height:6px;background:#111;border:1px solid #ddd"></div><div class="a" style="left:23px;top:592px;width:6px;height:6px;background:#eee;border:1px solid #222"></div>
<svg style="left:36px;top:588px" width="10" height="10"><path d="M1 4 C1 1.5 3 1 6 1 M6 1 V8" fill="none" stroke="#cfcfcf" stroke-width="1.2"/><path d="M4.5 -1 L7 1 L4.5 3Z M4 6 L6 9 L8 6Z" fill="#cfcfcf"/></svg>
<div class="a" style="left:29px;top:613px;width:17px;height:17px;background:#111;border:1px solid #e8e8e8"></div>
<div class="a" style="left:20px;top:603px;width:17px;height:17px;background:#ee1226;border:1px solid #f0f0f0"></div>
<svg style="left:25px;top:637px" width="16" height="13"><rect x="0.8" y="0.8" width="14.4" height="11.4" fill="#2e2e2e" stroke="#cfcfcf" stroke-width="1.4"/><circle cx="8" cy="6.5" r="3.3" fill="#555" stroke="#aaa" stroke-width="1.2" stroke-dasharray="1.5 1"/></svg>
<svg style="left:24px;top:662px" width="17" height="13"><rect x="5.5" y="0.5" width="11" height="9" fill="#7a7a7a" stroke="#d0d0d0"/><rect x="0.8" y="3" width="10.5" height="9.2" fill="#666" stroke="#cfcfcf" stroke-width="1.4"/></svg><svg style="left:42px;top:675px" width="3" height="3"><path d="M3 0V3H0Z" fill="#d0d0d0"/></svg>
<div class="a" style="left:817px;top:77px;width:259px;height:11px;background:#333"></div>
<svg style="left:840px;top:80px" width="8" height="5"><path d="M3.5 0L0 2.5L3.5 5Z M7.5 0L4 2.5L7.5 5Z" fill="#c8c8c8"/></svg>
<svg style="left:1063px;top:80px" width="8" height="5"><path d="M0 0L3.5 2.5L0 5Z M4 0L7.5 2.5L4 5Z" fill="#c8c8c8"/></svg>
<div class="a" style="left:817px;top:88px;width:34px;height:744px;background:#535353"></div>
<div class="a" style="left:851px;top:77px;width:3px;height:755px;background:#2e2e2e"></div>
<div class="a" style="left:817px;top:124px;width:34px;height:2px;background:#3a3a3a"></div>
<div class="a" style="left:817px;top:162px;width:34px;height:2px;background:#3a3a3a"></div>
<div class="a" style="left:817px;top:225px;width:34px;height:2px;background:#3a3a3a"></div>
<div class="a" style="left:826px;top:92px;width:18px;height:2px;background:repeating-linear-gradient(90deg,#2e2e2e 0 1px,#505050 1px 2px)"></div>
<div class="a" style="left:826px;top:130px;width:18px;height:2px;background:repeating-linear-gradient(90deg,#2e2e2e 0 1px,#505050 1px 2px)"></div>
<div class="a" style="left:826px;top:167px;width:18px;height:2px;background:repeating-linear-gradient(90deg,#2e2e2e 0 1px,#505050 1px 2px)"></div>
<svg style="left:828px;top:101px" width="16" height="17"><rect x="1" y="1.5" width="4" height="4" fill="#444" stroke="#cfcfcf"/><rect x="1" y="7" width="4" height="4" fill="#444" stroke="#cfcfcf"/><rect x="0.5" y="12" width="5" height="4.5" fill="#cfcfcf"/><path d="M10 3.5 C15 4 15.5 11 10.5 15" fill="none" stroke="#cfcfcf" stroke-width="2"/><path d="M7.5 3.5 L11.5 0.5 L11.5 6.5Z" fill="#cfcfcf"/></svg>
<svg style="left:828px;top:139px" width="16" height="16"><path d="M1 3 L5 1 L9 3 V8 L5 10 L1 8Z" fill="#cfcfcf"/><rect x="10.5" y="1" width="4" height="3.5" fill="#cfcfcf"/><rect x="10.5" y="6" width="4" height="3.5" fill="#cfcfcf"/><rect x="0.5" y="11.5" width="14" height="3.5" fill="#cfcfcf"/><path d="M10 12.5h3.5L11.7 14.5Z" fill="#555"/></svg>
<div class="t" style="left:828px;top:176px;font-size:17px;line-height:16px;color:#cfcfcf">A</div><div class="a" style="left:841px;top:176px;width:1px;height:15px;background:#cfcfcf"></div>
<svg style="left:829px;top:203px" width="12" height="16"><path d="M7 1 H3.5 A3.5 3.5 0 0 0 3.5 8 H6 V15 H8 V1Z" fill="#cfcfcf"/><rect x="9" y="1" width="2" height="14" fill="#cfcfcf"/></svg>
<div class="a" style="left:854px;top:88px;width:222px;height:744px;background:#303030"></div>
<div class="a" style="left:854px;top:88px;width:219px;height:16px;background:#3d3d3d"></div>
<div class="a" style="left:854px;top:88px;width:34px;height:16px;background:#535353;border-right:1px solid #2e2e2e"></div>
<div class="t" style="left:860px;top:90px;line-height:13px;font-size:11px;color:#e8e8e8">颜色</div>
<div class="a" style="left:888px;top:88px;width:35px;height:16px;background:#464646;border-right:1px solid #2e2e2e"></div>
<div class="t" style="left:894px;top:90px;line-height:13px;font-size:11px;color:#a8a8a8">色板</div>
<svg style="left:1056px;top:92px" width="15" height="9"><path d="M0 2.5H5L2.5 5.5Z" fill="#e0e0e0"/><path d="M6 1.5H14M6 4.5H14M6 7.5H14" stroke="#c0c0c0" stroke-width="1"/></svg>
<div class="a" style="left:854px;top:104px;width:219px;height:101px;background:#535353"></div>
<div class="a" style="left:868px;top:124px;width:17px;height:17px;background:#111;border:1px solid #ddd"></div>
<div class="a" style="left:859px;top:114px;width:17px;height:17px;background:#ee1226;border:1px solid #f0f0f0;box-shadow:0 0 0 1px #3a8a8a"></div>
<div class="t" style="left:893px;top:117px;font-size:11px;line-height:11px;color:#e0e0e0">R</div>
<div class="a" style="left:907px;top:115px;width:76px;height:6px;background:linear-gradient(90deg,#150a22,#e8203a);border:1px solid #6a6a6a"></div>
<svg style="left:975px;top:121px" width="10" height="8"><path d="M5 0.5 L9.5 7.5 H0.5Z" fill="#d0d0d0" stroke="#888" stroke-width="0.6"/></svg>
<div class="a" style="left:987px;top:113px;width:46px;height:18px;background:#404040;border:1px solid #484848"></div>
<div class="t" style="left:990px;top:117px;font-size:11px;line-height:11px;color:#ececec">246</div>
<div class="t" style="left:893px;top:140px;font-size:11px;line-height:11px;color:#e0e0e0">G</div>
<div class="a" style="left:907px;top:138px;width:76px;height:6px;background:linear-gradient(90deg,#e8202a,#e8e830);border:1px solid #6a6a6a"></div>
<svg style="left:907px;top:144px" width="10" height="8"><path d="M5 0.5 L9.5 7.5 H0.5Z" fill="#d0d0d0" stroke="#888" stroke-width="0.6"/></svg>
<div class="a" style="left:987px;top:136px;width:46px;height:18px;background:#404040;border:1px solid #484848"></div>
<div class="t" style="left:990px;top:140px;font-size:11px;line-height:11px;color:#ececec">11</div>
<div class="t" style="left:893px;top:163px;font-size:11px;line-height:11px;color:#e0e0e0">B</div>
<div class="a" style="left:907px;top:161px;width:76px;height:6px;background:linear-gradient(90deg,#e81a30,#d83adc);border:1px solid #6a6a6a"></div>
<svg style="left:914px;top:167px" width="10" height="8"><path d="M5 0.5 L9.5 7.5 H0.5Z" fill="#d0d0d0" stroke="#888" stroke-width="0.6"/></svg>
<div class="a" style="left:987px;top:159px;width:46px;height:18px;background:#404040;border:1px solid #484848"></div>
<div class="t" style="left:990px;top:163px;font-size:11px;line-height:11px;color:#ececec">38</div>
<svg style="left:864px;top:164px" width="11" height="10"><path d="M5.5 0.5L10.5 9.5H0.5Z" fill="#dcdcdc"/><path d="M5.5 3.5V6.5M5.5 7.5V8.5" stroke="#333" stroke-width="1.2"/></svg>
<div class="a" style="left:878px;top:164px;width:11px;height:11px;background:#e0202c;border:1px solid #eee"></div>
<div class="a" style="left:860px;top:188px;width:174px;height:13px;background:linear-gradient(180deg,rgba(255,255,255,.92) 0%,rgba(255,255,255,0) 45%,rgba(0,0,0,0) 55%,rgba(0,0,0,.85) 100%),linear-gradient(90deg,#e8302a 0%,#f4e43a 17%,#1a9a48 33%,#2aa0d8 50%,#20307a 63%,#8a1a8a 75%,#e0207a 85%,#e41a24 100%)"></div>
<div class="a" style="left:1034px;top:188px;width:8px;height:6px;background:#fff"></div><div class="a" style="left:1034px;top:194px;width:8px;height:7px;background:#000"></div>
<div class="a" style="left:854px;top:208px;width:219px;height:16px;background:#3d3d3d"></div>
<div class="a" style="left:854px;top:208px;width:35px;height:16px;background:#535353;border-right:1px solid #2e2e2e"></div>
<div class="t" style="left:860px;top:210px;line-height:13px;font-size:11px;color:#e8e8e8">调整</div>
<div class="a" style="left:889px;top:208px;width:37px;height:16px;background:#464646;border-right:1px solid #2e2e2e"></div>
<div class="t" style="left:895px;top:210px;line-height:13px;font-size:11px;color:#a8a8a8">样式</div>
<svg style="left:1056px;top:212px" width="15" height="9"><path d="M0 2.5H5L2.5 5.5Z" fill="#e0e0e0"/><path d="M6 1.5H14M6 4.5H14M6 7.5H14" stroke="#c0c0c0" stroke-width="1"/></svg>
<div class="a" style="left:854px;top:224px;width:219px;height:102px;background:#535353"></div>
<div class="t" style="left:862px;top:230px;font-size:11px;line-height:14px;color:#ececec">添加调整</div>
<svg style="left:0;top:0" width="0" height="0"><defs><linearGradient id="gr1"><stop offset="0" stop-color="#333"/><stop offset="1" stop-color="#ddd"/></linearGradient><radialGradient id="gr2" cx="0.5" cy="0.3" r="0.6"><stop offset="0" stop-color="#5a5a5a"/><stop offset="1" stop-color="#a8a8a8"/></radialGradient></defs></svg>
<svg style="left:897px;top:251px" width="18" height="18"><circle cx="8.5" cy="8.5" r="4" fill="none" stroke="#b4b4b4" stroke-width="1.6"/><path d="M8.5 4.5 A4 4 0 0 1 8.5 12.5Z" fill="#b4b4b4"/><path d="M8.5 0v2.5M8.5 14.5v2.5M0 8.5h2.5M14.5 8.5h2.5M2.5 2.5l1.8 1.8M12.7 12.7l1.8 1.8M2.5 14.5l1.8-1.8M12.7 4.3l1.8-1.8" stroke="#b4b4b4" stroke-width="1.4"/></svg>
<svg style="left:919px;top:253px" width="18" height="18"><path d="M0.5 9 L2 6 L3 8 L5 3 L6 7 L8 1 L9 6 L11 2.5 L12 7 L14 4 L15 8 L16.5 5 V11 H0.5Z" fill="#9a9a9a"/><path d="M1 4v6M4 5v5M8 2v8M12 4v6M15 5v5" stroke="#d0d0d0" stroke-width="1"/><rect x="0.5" y="10" width="16" height="3" fill="#b4b4b4"/></svg>
<svg style="left:941px;top:252px" width="18" height="18"><rect x="0.5" y="0.5" width="15" height="13" fill="#777" stroke="#b4b4b4"/><path d="M1 12 C6 12 9 2 15 2" fill="none" stroke="#b4b4b4" stroke-width="1.5"/><path d="M5.5 1v12M10.5 1v12M1 5h14M1 9h14" stroke="#9a9a9a" stroke-width="0.6"/></svg>
<svg style="left:964px;top:252px" width="18" height="18"><rect x="0.5" y="0.5" width="15" height="13" fill="#777" stroke="#b4b4b4"/><path d="M1 13 L15 1" stroke="#b4b4b4" stroke-width="1.2"/><path d="M2.5 4h4M4.5 2v4M9.5 10h4" stroke="#eee" stroke-width="1.3"/></svg>
<svg style="left:986px;top:251px" width="18" height="18"><path d="M0.5 0.5 H15.5 L8 15Z" fill="url(#gr2)" stroke="#b4b4b4" stroke-width="1.2"/></svg>
<svg style="left:887px;top:277px" width="18" height="18"><rect x="0.5" y="0.5" width="15" height="13" fill="#888" stroke="#b4b4b4"/><rect x="1" y="7" width="14" height="6" fill="#444"/><path d="M3 1v5M6 1v5M10 1v5M13 1v5" stroke="#eee" stroke-width="1.2"/></svg>
<svg style="left:909px;top:277px" width="18" height="18"><path d="M8 0v3M1 4h14M3 4L0.5 10h5Z M13 4L10.5 10h5Z" fill="none" stroke="#b4b4b4" stroke-width="1.3"/><path d="M0.5 10a2.5 2 0 0 0 5 0Z M10.5 10a2.5 2 0 0 0 5 0Z M6 13h4L8 3Z" fill="#b4b4b4"/></svg>
<svg style="left:931px;top:277px" width="18" height="18"><rect x="0.5" y="0.5" width="15" height="14" fill="#bbb" stroke="#b4b4b4"/><rect x="1" y="1" width="7" height="13" fill="#555"/></svg>
<svg style="left:952px;top:276px" width="18" height="18"><rect x="0.5" y="2.5" width="11" height="9" rx="1" fill="#aaa"/><circle cx="6" cy="7" r="3" fill="#666"/><circle cx="11" cy="11" r="4.5" fill="#888" stroke="#b4b4b4"/><path d="M8.5 11h5" stroke="#ddd"/></svg>
<svg style="left:975px;top:277px" width="18" height="18"><circle cx="8" cy="4.5" r="4" fill="#b4b4b4"/><circle cx="4.5" cy="10" r="4" fill="#aaa"/><circle cx="11.5" cy="10" r="4" fill="#bbb"/><path d="M8 6 L6 9 H10Z" fill="#666"/></svg>
<svg style="left:997px;top:277px" width="18" height="18"><rect x="0.5" y="0.5" width="15" height="14" fill="#666" stroke="#b4b4b4"/><path d="M1 5.3h14M1 10h14M5.5 1v13M10.5 1v13" stroke="#b4b4b4" stroke-width="1.2"/></svg>
<svg style="left:898px;top:302px" width="18" height="18"><rect x="0.5" y="0.5" width="15" height="13" fill="#777" stroke="#b4b4b4"/><path d="M2 11 C5 10 6 8 6 7 C6 4 12 5 14 2" fill="none" stroke="#333" stroke-width="2"/><path d="M2 10 C5 9 6 7 6 6 C6 3 12 4 14 1" fill="none" stroke="#ddd" stroke-width="1"/></svg>
<svg style="left:920px;top:302px" width="18" height="18"><rect x="0.5" y="0.5" width="15" height="13" fill="#888" stroke="#b4b4b4"/><path d="M1 11 L13 1 M4 13 L15 4" stroke="#ccc" stroke-width="2"/></svg>
<svg style="left:942px;top:302px" width="18" height="18"><rect x="0.5" y="0.5" width="15" height="13" fill="#777" stroke="#b4b4b4"/><path d="M1 10 L4 8 L6 9 L9 5 L11 6 L15 2" fill="none" stroke="#222" stroke-width="2"/><path d="M1 12 L4 10 L6 11 L9 7 L11 8 L15 4" fill="none" stroke="#ddd" stroke-width="1"/></svg>
<svg style="left:964px;top:302px" width="18" height="18"><rect x="0.5" y="0.5" width="15" height="13" fill="#9a9a9a" stroke="#b4b4b4"/><path d="M1 1 L8 7 L1 13Z M15 1 L8 7 L15 13Z" fill="#666"/></svg>
<svg style="left:986px;top:302px" width="18" height="18"><rect x="0.5" y="0.5" width="15" height="13" fill="#888" stroke="#b4b4b4"/><rect x="1" y="1" width="14" height="12" fill="url(#gr1)"/></svg>
<div class="a" style="left:854px;top:329px;width:219px;height:16px;background:#3d3d3d"></div>
<div class="a" style="left:854px;top:329px;width:35px;height:16px;background:#535353;border-right:1px solid #2e2e2e"></div>
<div class="t" style="left:860px;top:331px;line-height:13px;font-size:11px;color:#e8e8e8">图层</div>
<div class="a" style="left:889px;top:329px;width:37px;height:16px;background:#464646;border-right:1px solid #2e2e2e"></div>
<div class="t" style="left:895px;top:331px;line-height:13px;font-size:11px;color:#a8a8a8">通道</div>
<div class="a" style="left:926px;top:329px;width:36px;height:16px;background:#464646;border-right:1px solid #2e2e2e"></div>
<div class="t" style="left:932px;top:331px;line-height:13px;font-size:11px;color:#a8a8a8">路径</div>
<svg style="left:1056px;top:333px" width="15" height="9"><path d="M0 2.5H5L2.5 5.5Z" fill="#e0e0e0"/><path d="M6 1.5H14M6 4.5H14M6 7.5H14" stroke="#c0c0c0" stroke-width="1"/></svg>
<div class="a" style="left:854px;top:345px;width:219px;height:469px;background:#535353"></div>
<div class="a" style="left:857px;top:349px;width:64px;height:18px;background:linear-gradient(#5e5e5e,#525252);border:1px solid #3c3c3c;border-radius:2px"></div>
<svg style="left:862px;top:352px" width="10" height="10"><circle cx="5.5" cy="4.5" r="3.3" fill="none" stroke="#bbb" stroke-width="1.2"/><path d="M3 7L0.5 9.5" stroke="#bbb" stroke-width="1.3"/></svg>
<div class="t" style="left:878px;top:351px;font-size:11px;line-height:13px;color:#d8d8d8">类型</div>
<svg style="left:912px;top:353px" width="6" height="10"><path d="M0 4 L3 0.5 L6 4 Z M0 6 L3 9.5 L6 6 Z" fill="#c0c0c0"/></svg>
<svg style="left:941px;top:352px" width="14" height="12"><rect x="0.5" y="0.5" width="13" height="11" fill="none" stroke="#7c7c7c"/><rect x="3" y="3" width="8" height="6" fill="#7c7c7c"/></svg>
<svg style="left:963px;top:351px" width="13" height="13"><circle cx="6.5" cy="6.5" r="6" fill="#7c7c7c"/><path d="M3 10 C5 6 8 5 10 3" stroke="#555" stroke-width="1.5" fill="none"/></svg>
<div class="t" style="left:986px;top:350px;font-family:'Liberation Serif',serif;font-size:15px;line-height:14px;color:#7c7c7c">T</div>
<svg style="left:1008px;top:352px" width="13" height="12"><rect x="2.5" y="2.5" width="8" height="7" fill="none" stroke="#7c7c7c" stroke-width="1.2"/><path d="M0 2.5h4M9 2.5h4M0 9.5h4M9 9.5h4" stroke="#7c7c7c" stroke-width="1.2"/></svg>
<svg style="left:1030px;top:351px" width="12" height="13"><path d="M5 1 h5 v5 h-5z" fill="none" stroke="#7c7c7c" stroke-width="1.2"/><rect x="1" y="6" width="9" height="7" fill="#7c7c7c"/></svg>
<div class="a" style="left:1062px;top:350px;width:8px;height:15px;background:linear-gradient(#777,#444);border:1px solid #3a3a3a;border-radius:1px"></div>
<div class="a" style="left:854px;top:370px;width:219px;height:1px;background:#404040"></div><div class="a" style="left:854px;top:371px;width:219px;height:1px;background:#5c5c5c"></div>
<div class="a" style="left:857px;top:375px;width:102px;height:18px;background:linear-gradient(#5e5e5e,#525252);border:1px solid #3c3c3c;border-radius:2px"></div>
<div class="t" style="left:866px;top:377px;font-size:11px;line-height:13px;color:#d8d8d8">正常</div>
<svg style="left:948px;top:379px" width="6" height="10"><path d="M0 4 L3 0.5 L6 4 Z M0 6 L3 9.5 L6 6 Z" fill="#c0c0c0"/></svg>
<div class="t" style="left:966px;top:378px;font-size:11px;line-height:13px;color:#b8b8b8">不透明度:</div>
<div class="a" style="left:1018px;top:376px;width:34px;height:17px;background:#474747"></div>
<div class="t" style="left:1020px;top:379px;font-size:11px;line-height:11px;color:#5e5e5e">100%</div>
<div class="a" style="left:1052px;top:376px;width:17px;height:17px;background:#5a5a5a;border:1px solid #444"></div>
<svg style="left:1057px;top:383px" width="6" height="4"><path d="M0 0H6L3 3Z" fill="#bbb"/></svg>
<div class="a" style="left:854px;top:396px;width:219px;height:1px;background:#404040"></div><div class="a" style="left:854px;top:397px;width:219px;height:1px;background:#5c5c5c"></div>
<div class="t" style="left:860px;top:402px;font-size:11px;line-height:13px;color:#b8b8b8">锁定:</div>
<div class="a" style="left:894px;top:404px;width:10px;height:10px;background:repeating-conic-gradient(#8a8a8a 0 25%,#6a6a6a 0 50%) 0 0/5px 5px"></div>
<svg style="left:912px;top:401px" width="15" height="14"><path d="M14.5 0.5 L7 8" stroke="#7c7c7c" stroke-width="1.6"/><path d="M7 7.5 C4 7 3 10 0.5 13 C4 13 8 12 8 9Z" fill="#7c7c7c"/></svg>
<svg style="left:933px;top:401px" width="14" height="14"><path d="M7 1v12M1 7h12" stroke="#7c7c7c" stroke-width="1.3"/><path d="M5 3L7 1L9 3M5 11L7 13L9 11M3 5L1 7L3 9M11 5L13 7L11 9" fill="none" stroke="#7c7c7c" stroke-width="1.3"/></svg>
<svg style="left:954px;top:401px" width="12" height="14"><path d="M3 6V4a3 3 0 0 1 6 0v2" fill="none" stroke="#7c7c7c" stroke-width="1.5"/><rect x="1" y="6" width="10" height="7" fill="#7c7c7c"/></svg>
<div class="t" style="left:987px;top:403px;font-size:11px;line-height:13px;color:#b8b8b8">填充:</div>
<div class="a" style="left:1018px;top:401px;width:34px;height:17px;background:#474747"></div>
<div class="t" style="left:1020px;top:404px;font-size:11px;line-height:11px;color:#5e5e5e">100%</div>
<div class="a" style="left:1052px;top:401px;width:17px;height:17px;background:#5a5a5a;border:1px solid #444"></div>
<svg style="left:1057px;top:408px" width="6" height="4"><path d="M0 0H6L3 3Z" fill="#bbb"/></svg>
<div class="a" style="left:854px;top:422px;width:219px;height:392px;background:#474747;border-top:1px solid #3a3a3a"></div>
<div class="a" style="left:854px;top:424px;width:206px;height:35px;background:#535353"></div>
<div class="a" style="left:882px;top:424px;width:178px;height:35px;background:#5b6a7e"></div>
<div class="a" style="left:1060px;top:423px;width:13px;height:391px;background:#434343"></div>
<svg style="left:861px;top:437px" width="13" height="10"><path d="M0.5 5 C3 0.5 10 0.5 12.5 5 C10 9.5 3 9.5 0.5 5Z" fill="#9a9a9a"/><circle cx="6.5" cy="5" r="2.3" fill="#333"/></svg>
<div class="a" style="left:884px;top:426px;width:23px;height:31px;background:#fff;border:1px solid #222"></div>
<div class="t" style="left:918px;top:436px;font-size:11px;line-height:12px;color:#f0f0f0;font-style:italic">背景</div>
<svg style="left:1034px;top:435px" width="11" height="13"><path d="M2.5 6V4a3 3 0 0 1 6 0v2" fill="none" stroke="#e0e0e0" stroke-width="1.3"/><rect x="0.8" y="6" width="9.4" height="6.2" fill="none" stroke="#e0e0e0" stroke-width="1.3"/><path d="M5.5 8v2" stroke="#e0e0e0"/></svg>
<div class="a" style="left:854px;top:459px;width:206px;height:1px;background:#3e3e3e"></div>
<div class="a" style="left:854px;top:814px;width:219px;height:18px;background:#535353;border-top:1px solid #444"></div>
<svg style="left:887px;top:819px" width="15" height="8"><rect x="1" y="1" width="7" height="6" rx="3" fill="none" stroke="#9a9a9a" stroke-width="1.3"/><rect x="7" y="1" width="7" height="6" rx="3" fill="none" stroke="#9a9a9a" stroke-width="1.3"/></svg>
<div class="t" style="left:914px;top:817px;font-size:12px;line-height:12px;font-style:italic;color:#9a9a9a;font-family:'Liberation Serif',serif">fx</div>
<svg style="left:937px;top:817px" width="13" height="12"><rect x="0" y="0" width="13" height="12" fill="#9a9a9a"/><circle cx="6.5" cy="6" r="3" fill="#444"/></svg>
<svg style="left:962px;top:817px" width="14" height="13"><circle cx="6" cy="6" r="5.5" fill="#9a9a9a"/><path d="M3 9 L9 3" stroke="#555" stroke-width="1.3"/><path d="M11 11h3l-1.5 2Z" fill="#9a9a9a"/></svg>
<svg style="left:987px;top:817px" width="13" height="12"><path d="M0 2h5l1 -2h7v12h-13z" fill="#9a9a9a"/></svg>
<svg style="left:1011px;top:816px" width="13" height="13"><rect x="3" y="0" width="10" height="10" fill="#9a9a9a"/><rect x="0" y="3" width="8" height="10" fill="#bbb"/></svg>
<svg style="left:1036px;top:817px" width="12" height="13"><rect x="1.5" y="3" width="9" height="9.5" fill="none" stroke="#7a7a7a" stroke-width="1.2"/><path d="M0 2h12M4 0.5h4" stroke="#7a7a7a" stroke-width="1.2"/></svg>
<div class="a" style="left:1073px;top:77px;width:3px;height:755px;background:#3a3a3a"></div><div class="a" style="left:1075px;top:46px;width:2px;height:786px;background:#4e4e4e"></div>
<div class="a" style="left:442px;top:3px;width:75px;height:56px;border:solid #f47b26;border-width:13px 12px 13px 12px"></div>
<svg style="left:0;top:0" width="1080" height="840"><path d="M237.9 300.4 L399.5 97 L386 86.4 L435.9 67.1 L427.9 119.7 L415 111.6 L244.9 306.2 Z" fill="#f47b26"/></svg>
<svg style="left:0;top:0" width="1080" height="840"><path d="M901 762 Q903 751 922 750.7 L1048 750.7 L1064 758 Q1067.7 760 1067.7 766 L1067.7 810.7 L1052 819.3 L912 819.3 Q901 818 901 808 Z" fill="#fff"/><path d="M940.4 807 A23.8 23.8 0 1 1 956.4 790.2" fill="none" stroke="#2f6ff0" stroke-width="7" stroke-linecap="round"/><circle cx="933.3" cy="784.2" r="10.8" fill="none" stroke="#f5a52c" stroke-width="6"/><path d="M942 793 L951.5 802" stroke="#f5a52c" stroke-width="6" stroke-linecap="round"/></svg>
<div class="t" style="left:961px;top:759px;font-size:36px;line-height:40px;color:#111;transform:scaleY(1.17);transform-origin:0 0">查询啦</div>
<div class="t" style="left:964px;top:801px;font-size:15px;line-height:18px;color:#111;-webkit-text-stroke:0.3px #111">chaxunla.com</div>
</body></html>
